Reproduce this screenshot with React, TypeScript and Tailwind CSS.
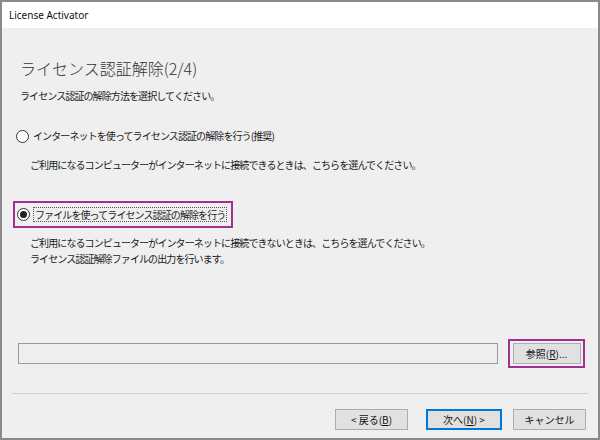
import React from 'react';

const jp = { fontFamily: '"Noto Sans CJK JP", "Noto Sans", sans-serif' };

function Radio({ checked }: { checked?: boolean }) {
  return (
    <span className="w-[13px] h-[13px] rounded-full border border-[#333] bg-white flex items-center justify-center shrink-0">
      {checked && <span className="w-[7px] h-[7px] rounded-full bg-[#222]" />}
    </span>
  );
}

function WinButton({ children, primary, className = '' }: { children: React.ReactNode; primary?: boolean; className?: string }) {
  return (
    <button
      className={
        'h-[21px] bg-[#e1e1e1] text-[10px] text-[#111] flex items-center justify-center leading-none ' +
        (primary ? 'border-2 border-[#0078d7] ' : 'border border-[#adadad] ') +
        className
      }
      style={jp}
    >
      {children}
    </button>
  );
}

export default function App() {
  return (
    <div className="w-[600px] h-[440px] bg-white">
      <div className="w-full h-full border-2 border-[#8a8a8a] flex flex-col bg-[#efefef] text-[#1a1a1a]" style={jp}>
        {/* title bar */}
        <div className="h-[26px] bg-white flex items-center pl-[7px] shrink-0">
          <span className="text-[10px] text-[#111]" style={{ fontFamily: '"Noto Sans", sans-serif' }}>License Activator</span>
        </div>

        <div className="flex-1 flex flex-col">
          <div className="pl-[18px]">
            <div className="mt-[30px] text-[16px] leading-[20px] font-light text-[#333]">ライセンス認証解除(2/4)</div>
            <div className="mt-[11px] text-[10px] leading-[14px] tracking-[-0.9px]">ライセンス認証の解除方法を選択してください。</div>
          </div>

          {/* option 1 */}
          <div className="mt-[25px] pl-[14px] flex items-center gap-[4px] h-[16px]">
            <Radio />
            <span className="text-[10px] leading-[14px] tracking-[-0.9px]">インターネットを使ってライセンス認証の解除を行う(推奨)</span>
          </div>
          <div className="mt-[14px] pl-[28px] text-[10px] leading-[14px] tracking-[-0.9px]">
            ご利用になるコンピューターがインターネットに接続できるときは、こちらを選んでください。
          </div>

          {/* option 2 */}
          <div className="mt-[29px] ml-[11px] w-[220px] h-[27px] border-2 border-[#a0318f] flex items-center pl-[2px] gap-[3px]">
            <Radio checked />
            <span className="border border-dotted border-[#555] px-[1px] text-[10px] leading-[13px] tracking-[-0.9px]">
              ファイルを使ってライセンス認証の解除を行う
            </span>
          </div>
          <div className="mt-[7px] pl-[28px] text-[10px] leading-[16px] tracking-[-0.9px]">
            <div>ご利用になるコンピューターがインターネットに接続できないときは、こちらを選んでください。</div>
            <div>ライセンス認証解除ファイルの出力を行います。</div>
          </div>

          {/* file row */}
          <div className="mt-auto flex items-center pl-[16px] pr-[13px]">
            <div className="flex-1 h-[21px] border border-[#9a9a9a] bg-[#eeeeee]" />
            <div className="ml-[10px] w-[77px] h-[29px] border-2 border-[#a0318f] flex items-center justify-center">
              <WinButton className="w-[68px]">
                参照(<span className="underline">R</span>)...
              </WinButton>
            </div>
          </div>

          <div className="mt-[25px] mx-[10px] h-px bg-[#d0d0d0]" />

          <div className="mt-[15px] mb-[8px] flex justify-end pr-[12px]">
            <WinButton className="w-[73px]">
              &lt; 戻る(<span className="underline">B</span>)
            </WinButton>
            <WinButton primary className="w-[76px] ml-[18px]">
              次へ(<span className="underline">N</span>) &gt;
            </WinButton>
            <WinButton className="w-[73px] ml-[11px]">キャンセル</WinButton>
          </div>
        </div>
      </div>
    </div>
  );
}
